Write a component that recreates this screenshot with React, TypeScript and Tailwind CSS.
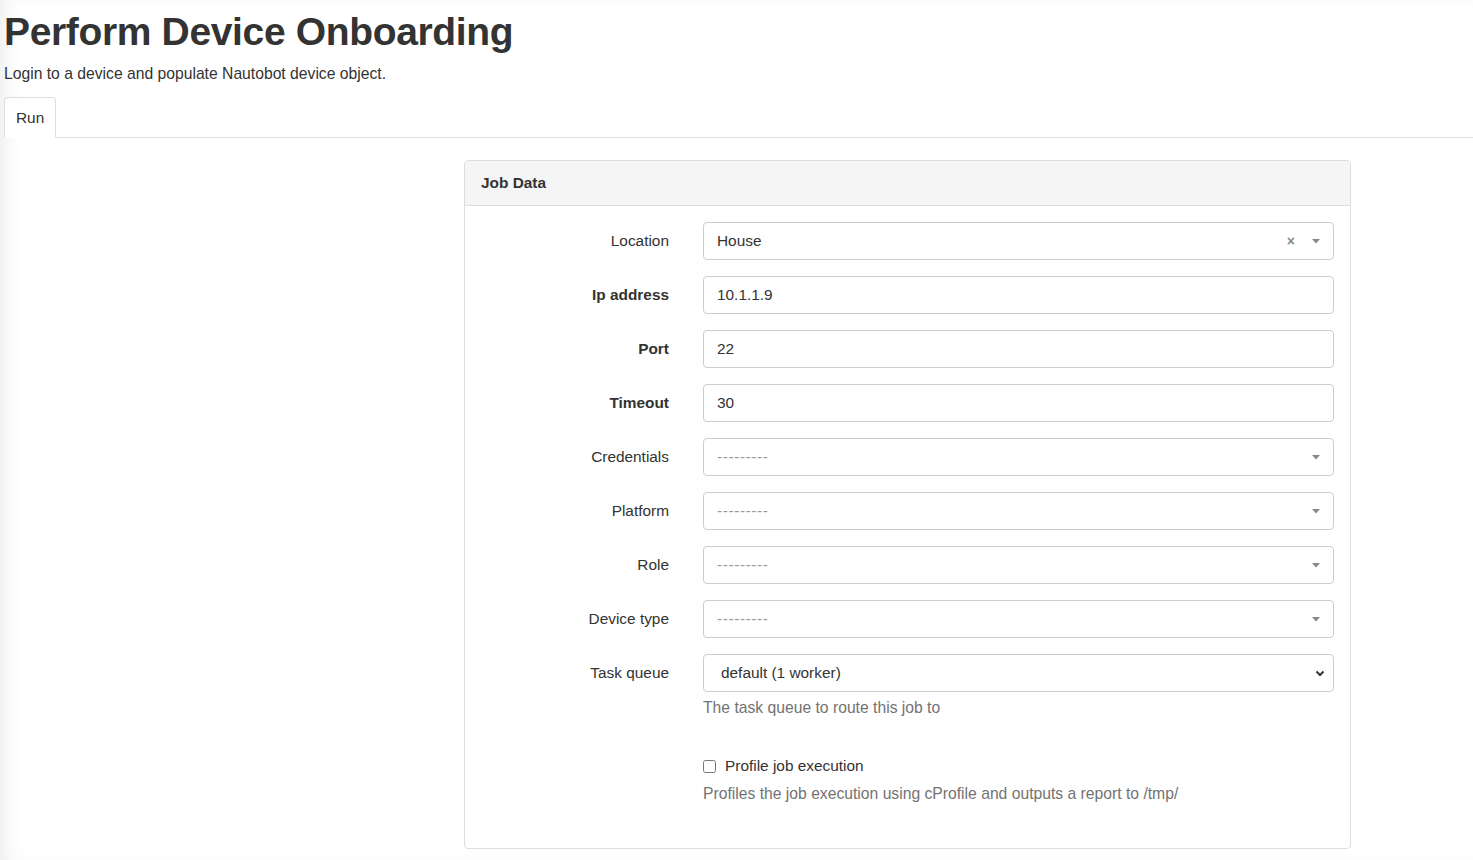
import React, { useState } from "react";

type Field = {
  label: string;
  value: string;
  kind: "select2" | "text";
  bold?: boolean;
  clearable?: boolean;
};

const fields: Field[] = [
  { label: "Location", value: "House", kind: "select2", clearable: true },
  { label: "Ip address", value: "10.1.1.9", kind: "text", bold: true },
  { label: "Port", value: "22", kind: "text", bold: true },
  { label: "Timeout", value: "30", kind: "text", bold: true },
  { label: "Credentials", value: "---------", kind: "select2" },
  { label: "Platform", value: "---------", kind: "select2" },
  { label: "Role", value: "---------", kind: "select2" },
  { label: "Device type", value: "---------", kind: "select2" },
];

const Caret = () => (
  <svg width="8" height="5" viewBox="0 0 8 5" className="ml-[17px]">
    <path d="M0 0 L8 0 L4 4.5 Z" fill="#888" />
  </svg>
);

const FormRow = ({ field }: { field: Field }) => {
  const [val, setVal] = useState(field.value);
  const placeholder = field.value.startsWith("---");

  return (
    <div className="flex items-center h-[38px] mb-[16px]">
      <label
        className={`w-[238px] shrink-0 pr-[34px] text-right text-[15.4px] text-[#333] ${
          field.bold ? "font-bold" : ""
        }`}
      >
        {field.label}
      </label>
      {field.kind === "text" ? (
        <input
          value={val}
          onChange={(e) => setVal(e.target.value)}
          className="flex-1 h-[38px] px-[13px] rounded-[4px] border border-[#ccc] text-[15.4px] text-[#333] outline-none"
        />
      ) : (
        <div className="flex-1 h-[38px] flex items-center px-[13px] rounded-[4px] border border-[#ccc] bg-white">
          <span
            className={`flex-1 ${placeholder ? "text-[#999] text-[15.4px] tracking-[0.6px]" : "text-[15.4px] text-[#333]"}`}
          >
            {field.value}
          </span>
          {field.clearable && (
            <span className="text-[#888] text-[14px] font-bold leading-none">×</span>
          )}
          <Caret />
        </div>
      )}
    </div>
  );
};

const App: React.FC = () => {
  const [profile, setProfile] = useState(false);

  return (
    <div
      className="min-h-[860px] bg-white pl-[4px] text-[#333] shadow-[inset_14px_0_22px_-12px_rgba(0,0,0,0.09)]"
      style={{ fontFamily: '"Liberation Sans", Arial, sans-serif' }}
    >
      <h1 className="pt-[9px] text-[39px] font-bold leading-[46px] text-[#333] tracking-[-0.35px]">
        Perform Device Onboarding
      </h1>
      <p className="mt-[9px] text-[15.7px] leading-[20px]">
        Login to a device and populate Nautobot device object.
      </p>

      {/* Tabs */}
      <div className="mt-[13px] flex border-b border-[#ddd]">
        <div className="-mb-px h-[41px] px-[11px] flex items-center rounded-t-[4px] border border-[#ddd] border-b-white bg-white text-[15.4px]">
          Run
        </div>
      </div>

      {/* Panel */}
      <div className="ml-[460px] mt-[22px] w-[887px] rounded-[4px] border border-[#ddd] bg-white">
        <div className="h-[45px] flex items-center px-[16px] bg-[#f5f5f5] border-b border-[#ddd] rounded-t-[4px] text-[15.4px] font-bold">
          Job Data
        </div>
        <div className="pt-[16px] pr-[16px] pb-[44px]">
          {fields.map((f) => (
            <FormRow key={f.label} field={f} />
          ))}

          <div className="flex items-center h-[38px]">
            <label className="w-[238px] shrink-0 pr-[34px] text-right text-[15.4px]">Task queue</label>
            <div className="flex-1 h-[38px] flex items-center pl-[17px] pr-[8px] rounded-[4px] border border-[#ccc] bg-white">
              <span className="flex-1 text-[15.4px]">default (1 worker)</span>
              <svg width="10" height="7" viewBox="0 0 10 7">
                <path d="M1.5 1.5 L5 5 L8.5 1.5" stroke="#333" strokeWidth="2" fill="none" />
              </svg>
            </div>
          </div>
          <div className="pl-[238px] mt-[6px] text-[15.7px] text-[#737373] leading-[20px]">
            The task queue to route this job to
          </div>

          <div className="pl-[238px] mt-[38px] flex items-center h-[20px]">
            <input
              type="checkbox"
              checked={profile}
              onChange={(e) => setProfile(e.target.checked)}
              className="w-[13px] h-[13px] m-0"
            />
            <span className="ml-[9px] text-[15.4px]">Profile job execution</span>
          </div>
          <div className="pl-[238px] mt-[8px] text-[15.7px] text-[#737373] leading-[20px]">
            Profiles the job execution using cProfile and outputs a report to /tmp/
          </div>
        </div>
      </div>
    </div>
  );
};

export default App;
